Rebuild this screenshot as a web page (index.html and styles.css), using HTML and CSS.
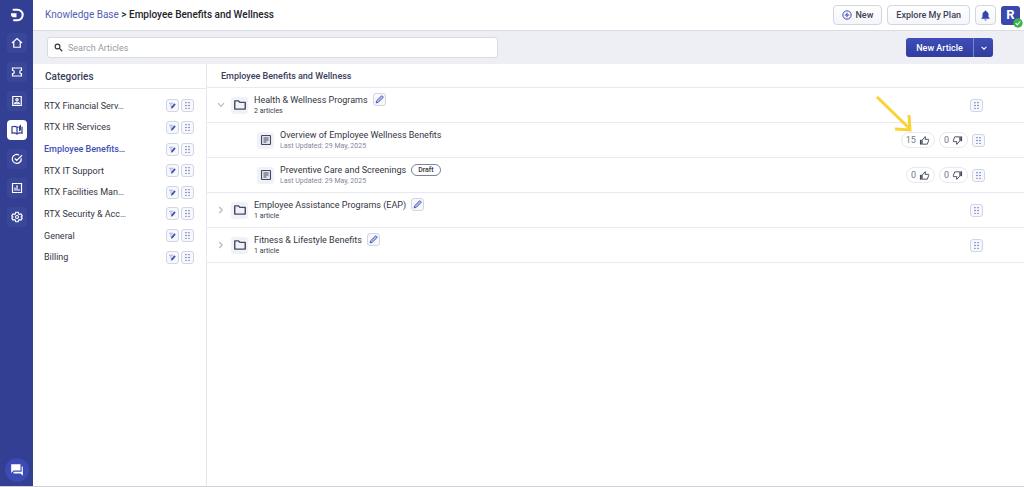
FILE: index.html
```html
<!DOCTYPE html>
<html lang="en">
<head>
<meta charset="utf-8">
<title>Knowledge Base</title>
<link rel="stylesheet" href="styles.css">
</head>
<body>
<svg class="defs" aria-hidden="true">
  <symbol id="grip" viewBox="0 0 12 12"><g fill="currentColor"><circle cx="4" cy="2.200" r=".9"/><circle cx="8" cy="2.200" r=".9"/><circle cx="4" cy="6" r=".9"/><circle cx="8" cy="6" r=".9"/><circle cx="4" cy="9.800" r=".9"/><circle cx="8" cy="9.800" r=".9"/></g></symbol>
  <symbol id="pencil" viewBox="0 0 12 12"><path d="M1.500 10.500l.6-2.700L8.500 1.400a.9.9 0 0 1 1.300 0l.8.8a.9.9 0 0 1 0 1.300L4.200 9.900z" fill="#b9c1f0" stroke="currentColor" stroke-width="1.300" stroke-linejoin="round"/></symbol>
  <symbol id="rename" viewBox="0 0 12 12"><path d="M1.500 3h5M2.500 5.300h3M3.500 7.500h1.500" stroke="#a3aae0" stroke-width="1.500"/><path d="M4 10.300l.4-2.400L8.300 3l2 1.600-3.800 4.600z" fill="currentColor"/></symbol>
  <symbol id="folder" viewBox="0 0 24 24"><path d="M3 5h6.500l2.300 2.500H21V19H3z" fill="none" stroke="currentColor" stroke-width="2.400" stroke-linejoin="round"/></symbol>
  <symbol id="doc" viewBox="0 0 24 24"><rect x="3" y="3" width="18" height="18" rx="1" fill="#e0e2ec" stroke="currentColor" stroke-width="2.200"/><path d="M7 8h10M7 12h10M7 16h6" stroke="currentColor" stroke-width="2"/></symbol>
  <symbol id="up" viewBox="0 0 24 24"><path d="M2 10.500h4V21H2z" fill="currentColor"/><path d="M7 11l6.500-7.500.8.8L13.300 9.500H21v3L18 20H7z" fill="none" stroke="currentColor" stroke-width="2" stroke-linejoin="round"/></symbol>
  <symbol id="down" viewBox="0 0 24 24"><path d="M22 13.500h-4V3h4z" fill="currentColor"/><path d="M17 13l-6.500 7.500-.8-.8 1-5.200H3v-3L6 4h11z" fill="none" stroke="currentColor" stroke-width="2" stroke-linejoin="round"/></symbol>
  <symbol id="chev" viewBox="0 0 10 10"><path d="M3.200 2L6.300 5 3.200 8" fill="none" stroke="currentColor" stroke-width="1.200"/></symbol>
</svg>
<div class="app">
  <nav class="rail" aria-label="Main">
    <a class="logo" href="#" aria-label="Home"><svg viewBox="0 0 14 14"><path d="M3.500 1.800h4a5.200 5.200 0 0 1 0 10.400H4" fill="none" stroke="#fff" stroke-width="2" stroke-linecap="round"/><path d="M1 5.300h5.500v3.900H3.800A2.800 2.800 0 0 1 1 6.500z" fill="#fff"/></svg></a>
    <a class="item" href="#" aria-label="Dashboard"><svg viewBox="0 0 24 24"><path d="M2 12L12 3l10 9M5.500 10v10.500h13V10"/></svg></a>
    <a class="item" href="#" aria-label="Tickets"><svg viewBox="0 0 24 24"><path d="M3 4h18v4.500a3.500 3.500 0 0 0 0 7V20H3v-4.500a3.500 3.500 0 0 0 0-7z"/></svg></a>
    <a class="item" href="#" aria-label="Contacts"><svg viewBox="0 0 24 24"><path d="M3.500 3h17v18h-17z"/><circle cx="12" cy="9.500" r="2.300"/><path d="M7 17.500c1-4 9-4 10 0z"/></svg></a>
    <a class="item current" href="#" aria-label="Knowledge base"><svg viewBox="0 0 24 24"><path d="M12 20V6C9 4.500 5 4.500 2 5.500v13c3-1 7-.5 10 1.500 3-2 7-2.500 10-1.500v-13M12 7.500l3-2"/><path d="M16 4.500L20 1v11l-4 3z" fill="currentColor" stroke="none"/></svg></a>
    <a class="item" href="#" aria-label="Tasks"><svg viewBox="0 0 24 24"><path d="M20.500 10.500A9 9 0 1 1 16 4M7.500 11l4 4L22 4.500"/></svg></a>
    <a class="item" href="#" aria-label="Reports"><svg viewBox="0 0 24 24"><path d="M3 3h18v18H3zM8 11v6.500M12 6.500v11M16 14v3.500"/></svg></a>
    <a class="item" href="#" aria-label="Settings"><svg viewBox="0 0 24 24"><path d="M9.500 2.500h5l.6 3 2 1.200 3-1 2.400 4.200-2.300 2.100 2.300 2.100-2.400 4.200-3-1-2 1.200-.6 3h-5l-.6-3-2-1.200-3 1-2.400-4.200L3.800 12 1.500 9.900l2.400-4.200 3 1 2-1.200z"/><circle cx="12" cy="12" r="3"/></svg></a>
    <button class="chat" aria-label="Chat"><svg viewBox="0 0 24 24" fill="#fff"><path d="M2 2h16v11H6l-4 4zM20 6h2v16l-4-4H6v-3h14z"/></svg></button>
  </nav>
  <div class="page">
    <header class="top">
      <h1 class="crumbs"><a href="#">Knowledge Base</a> &gt; Employee Benefits and Wellness</h1>
      <button class="btn"><svg viewBox="0 0 12 12" fill="none" stroke="#3d4bb0" stroke-width="1.200"><circle cx="6" cy="6" r="5"/><path d="M6 3.200v5.600M3.200 6h5.600"/></svg>New</button>
      <button class="btn">Explore My Plan</button>
      <button class="btn bell" aria-label="Notifications"><svg viewBox="0 0 12 12" fill="#3544ab"><path d="M6 .5c.6 0 1 .4 1 1 1.600.5 2.300 1.800 2.300 3.500v2.700L10.500 9v.6h-9V9l1.200-1.300V5c0-1.700.7-3 2.300-3.500 0-.6.4-1 1-1zM4.800 10.300h2.400a1.200 1.200 0 0 1-2.400 0z"/></svg></button>
      <button class="avatar" aria-label="Account">R<svg class="status" viewBox="0 0 10 10"><circle cx="5" cy="5" r="4.700" fill="#3db54a"/><path d="M2.700 5.200l1.600 1.600 3-3.300" fill="none" stroke="#fff" stroke-width="1.100"/></svg></button>
    </header>
    <div class="tools">
      <label class="search"><svg viewBox="0 0 12 12" fill="none" stroke="#333" stroke-width="1.500"><circle cx="4.700" cy="4.700" r="3.200"/><path d="M7 7l4 4"/></svg><input type="search" placeholder="Search Articles" aria-label="Search Articles"></label>
      <div class="split"><button class="primary">New Article</button><button class="more" aria-label="More options"><svg viewBox="0 0 10 10" fill="none" stroke="#fff" stroke-width="1.300"><path d="M2 3.500l3 3 3-3"/></svg></button></div>
    </div>
    <div class="body">
      <aside class="cats">
        <h2 class="cats-title">Categories</h2>
        <ul class="cat-list">
          <li><a href="#">RTX Financial Serv…</a><button class="sq" aria-label="Edit"><svg><use href="#rename"/></svg></button><button class="sq" aria-label="Move"><svg><use href="#grip"/></svg></button></li>
          <li><a href="#">RTX HR Services</a><button class="sq" aria-label="Edit"><svg><use href="#rename"/></svg></button><button class="sq" aria-label="Move"><svg><use href="#grip"/></svg></button></li>
          <li><a class="active" href="#">Employee Benefits…</a><button class="sq" aria-label="Edit"><svg><use href="#rename"/></svg></button><button class="sq" aria-label="Move"><svg><use href="#grip"/></svg></button></li>
          <li><a href="#">RTX IT Support</a><button class="sq" aria-label="Edit"><svg><use href="#rename"/></svg></button><button class="sq" aria-label="Move"><svg><use href="#grip"/></svg></button></li>
          <li><a href="#">RTX Facilities Man…</a><button class="sq" aria-label="Edit"><svg><use href="#rename"/></svg></button><button class="sq" aria-label="Move"><svg><use href="#grip"/></svg></button></li>
          <li><a href="#">RTX Security &amp; Acc…</a><button class="sq" aria-label="Edit"><svg><use href="#rename"/></svg></button><button class="sq" aria-label="Move"><svg><use href="#grip"/></svg></button></li>
          <li><a href="#">General</a><button class="sq" aria-label="Edit"><svg><use href="#rename"/></svg></button><button class="sq" aria-label="Move"><svg><use href="#grip"/></svg></button></li>
          <li><a href="#">Billing</a><button class="sq" aria-label="Edit"><svg><use href="#rename"/></svg></button><button class="sq" aria-label="Move"><svg><use href="#grip"/></svg></button></li>
        </ul>
      </aside>
      <main class="main">
        <h2 class="main-title">Employee Benefits and Wellness</h2>
        <div class="row">
          <button class="toggle open" aria-label="Collapse"><svg><use href="#chev"/></svg></button>
          <span class="tile"><svg><use href="#folder"/></svg></span>
          <div class="text"><div class="name">Health &amp; Wellness Programs<button class="sq" aria-label="Edit"><svg><use href="#pencil"/></svg></button></div><div class="count">2 articles</div></div>
          <button class="sq" aria-label="Move"><svg><use href="#grip"/></svg></button>
        </div>
        <div class="row article">
          <span class="tile"><svg><use href="#doc"/></svg></span>
          <div class="text"><div class="name">Overview of Employee Wellness Benefits</div><div class="date">Last Updated: 29 May, 2025</div></div>
          <button class="vote">15<svg><use href="#up"/></svg><svg class="arrow" viewBox="0 0 38 38" aria-hidden="true"><path d="M2 2l33 32M20 34l15 1-1-15" fill="none" stroke="#fbd234" stroke-width="3"/></svg></button>
          <button class="vote">0<svg><use href="#down"/></svg></button>
          <button class="sq" aria-label="Move"><svg><use href="#grip"/></svg></button>
        </div>
        <div class="row article">
          <span class="tile"><svg><use href="#doc"/></svg></span>
          <div class="text"><div class="name">Preventive Care and Screenings<span class="draft">Draft</span></div><div class="date">Last Updated: 29 May, 2025</div></div>
          <button class="vote">0<svg><use href="#up"/></svg></button>
          <button class="vote">0<svg><use href="#down"/></svg></button>
          <button class="sq" aria-label="Move"><svg><use href="#grip"/></svg></button>
        </div>
        <div class="row">
          <button class="toggle" aria-label="Expand"><svg><use href="#chev"/></svg></button>
          <span class="tile"><svg><use href="#folder"/></svg></span>
          <div class="text"><div class="name">Employee Assistance Programs (EAP)<button class="sq" aria-label="Edit"><svg><use href="#pencil"/></svg></button></div><div class="count">1 article</div></div>
          <button class="sq" aria-label="Move"><svg><use href="#grip"/></svg></button>
        </div>
        <div class="row">
          <button class="toggle" aria-label="Expand"><svg><use href="#chev"/></svg></button>
          <span class="tile"><svg><use href="#folder"/></svg></span>
          <div class="text"><div class="name">Fitness &amp; Lifestyle Benefits<button class="sq" aria-label="Edit"><svg><use href="#pencil"/></svg></button></div><div class="count">1 article</div></div>
          <button class="sq" aria-label="Move"><svg><use href="#grip"/></svg></button>
        </div>
      </main>
    </div>
  </div>
</div>
</body>
</html>
```
FILE: styles.css
```css
*, *::before, *::after { box-sizing: border-box; }
body { margin: 0; font: 9px/12px Roboto, "Liberation Sans", sans-serif; color: #34353f; background: #fff; }
button, input { font: inherit; color: inherit; padding: 0; margin: 0; border: 0; background: none; }
a { color: inherit; text-decoration: none; }
h1, h2, ul { margin: 0; padding: 0; font-size: inherit; }
svg { display: block; flex: none; }
.defs { position: absolute; width: 0; height: 0; }

.app { display: flex; min-height: 100vh; border-bottom: 1px solid #cfcfd4; }
.rail { width: 33px; flex: none; display: flex; flex-direction: column; align-items: center; gap: 9px; padding: 6px 0 4px; background: #333f92; }
.logo, .item { width: 20px; height: 20px; display: grid; place-items: center; border-radius: 4px; }
.logo { height: 18px; }
.logo svg { width: 14px; height: 14px; }
.item { background: #3a4799; color: #fff; }
.item svg { width: 12px; height: 12px; fill: none; stroke: currentColor; stroke-width: 2.4px; }
.item.current { background: #fff; color: #333f92; }
.chat { width: 24px; height: 24px; margin-top: auto; display: grid; place-items: center; border-radius: 50%; background: #3b4ab4; }
.chat svg { width: 14px; height: 14px; }

.page { flex: 1; min-width: 0; display: flex; flex-direction: column; }
.top { height: 31px; display: flex; align-items: center; gap: 5px; padding: 0 4px 0 12px; border-bottom: 1px solid #dadce3; }
.crumbs { flex: 1; font-size: 10px; font-weight: 500; color: #22232b; }
.crumbs a { color: #5460b5; font-weight: 400; }
.btn { height: 20px; padding: 0 8px; display: flex; align-items: center; gap: 3px; border: 1px solid #d3d5e0; border-radius: 4px; background: linear-gradient(#fff, #f5f6fa); font-weight: 500; color: #3d4057; }
.btn svg { width: 10px; height: 10px; }
.bell { padding: 0 4px; }
.bell svg { width: 11px; height: 11px; }
.avatar { position: relative; width: 19px; height: 19px; border-radius: 3px; background: #3948ad; color: #fff; font-size: 13px; font-weight: 700; }
.status { position: absolute; right: -3px; bottom: -3px; width: 10px; height: 10px; }

.tools { height: 33px; display: flex; align-items: center; justify-content: space-between; padding: 0 31px 0 14px; background: #eeeff4; }
.search { width: 451px; height: 21px; display: flex; align-items: center; gap: 5px; padding: 0 6px; border: 1px solid #d9dbe3; border-radius: 3px; background: #fff; }
.search svg { width: 9px; height: 9px; }
.search input { flex: 1; min-width: 0; outline: 0; }
.search input::placeholder { color: #9a9ba3; }
.split { display: flex; height: 19px; border-radius: 3px; overflow: hidden; background: linear-gradient(#3f4db8, #303d9d); color: #fff; }
.primary { width: 67px; font-weight: 500; }
.more { width: 20px; display: grid; place-items: center; border-left: 1px solid #7a84cd; }
.more svg { width: 8px; height: 8px; }

.body { flex: 1; display: flex; }
.cats { width: 174px; flex: none; border-right: 1px solid #e6e7ed; }
.cats-title { height: 25px; line-height: 25px; padding-left: 12px; border-bottom: 1px solid #e6e7ed; font-size: 10px; font-weight: 500; color: #3b3d5c; }
.cat-list { list-style: none; padding: 6px 12px 0 11px; display: grid; grid-auto-rows: 1fr; min-height: 179px; }
.cat-list li { display: flex; align-items: center; gap: 2px; }
.cat-list a { flex: 1; }
.cat-list .active { color: #3f4fb8; font-weight: 500; }
.sq { width: 13px; height: 13px; flex: none; display: grid; place-items: center; border: 1px solid #d2d5e3; border-radius: 3px; background: #f7f8fc; color: #4553b3; }
.sq svg { width: 9px; height: 9px; }

.main { flex: 1; min-width: 0; }
.main-title { height: 24px; line-height: 24px; padding-left: 14px; border-bottom: 1px solid #e9eaef; font-weight: 500; color: #3b3d5c; }
.row { height: 35px; display: flex; align-items: center; padding: 0 41px 0 9px; border-bottom: 1px solid #e9eaef; }
.toggle { width: 10px; height: 10px; color: #b4b7c8; }
.toggle svg { width: 10px; height: 10px; }
.toggle.open svg { transform: rotate(90deg); }
.tile { width: 17px; height: 17px; margin: 0 6px 0 5px; display: grid; place-items: center; border-radius: 3px; background: #f1f2f7; color: #454860; }
.tile svg { width: 14px; height: 14px; }
.text { flex: 1; min-width: 0; }
.name { display: flex; align-items: center; gap: 5px; height: 13px; }
.count, .date { font-size: 7px; line-height: 11px; color: #3a3c4c; }
.date { color: #85879f; }
.article { padding: 0 39px 0 45px; }
.article .tile svg { width: 12px; height: 12px; }
.draft { padding: 0 6px; border: 1px solid #7e8197; border-radius: 6px; font-size: 7px; line-height: 10px; font-weight: 500; }
.vote { position: relative; height: 16px; margin-right: 4px; padding: 0 4px; display: flex; align-items: center; gap: 3px; border: 1px solid #e8e9ee; border-radius: 8px; color: #74768a; }
.vote svg { width: 11px; height: 11px; color: #44475c; }
.vote .arrow { position: absolute; right: 21px; bottom: 14px; width: 38px; height: 38px; }
```
